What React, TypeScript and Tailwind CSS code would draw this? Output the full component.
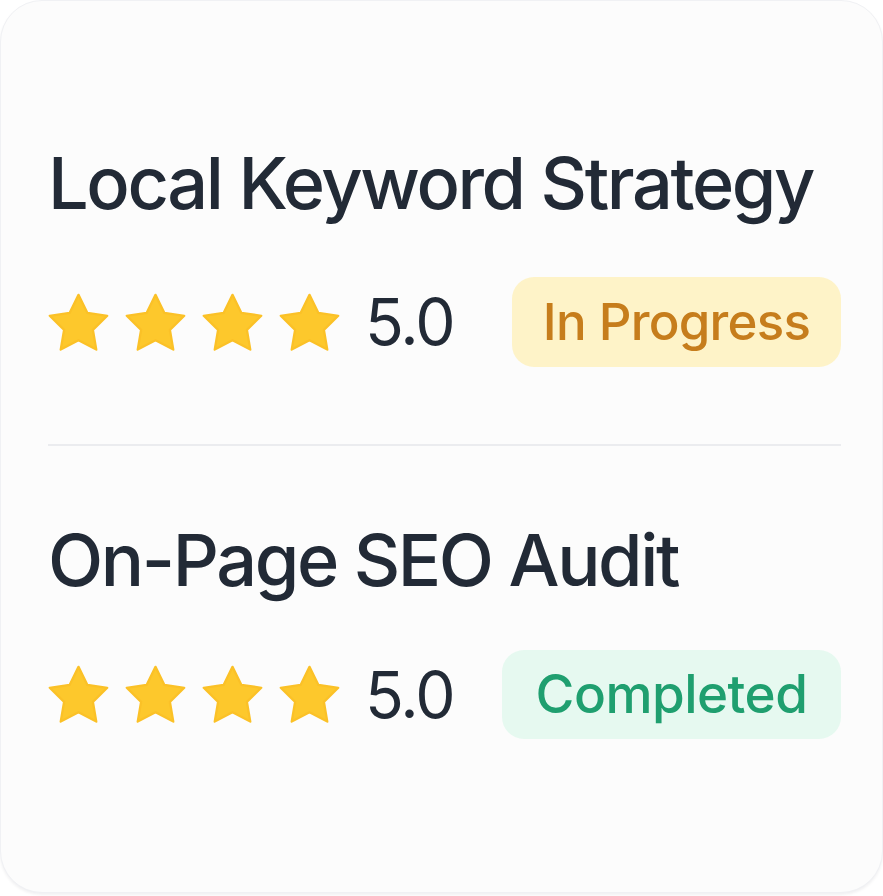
import type { ReactNode } from "react";

type Task = {
  title: string;
  rating: string;
  status: "progress" | "done";
};

const TASKS: Task[] = [
  { title: "Local Keyword Strategy", rating: "5.0", status: "progress" },
  { title: "On-Page SEO Audit", rating: "5.0", status: "done" },
];

function Star() {
  return (
    <svg viewBox="1.4 1.4 21.2 20.4" className="h-[61px] w-[61px] shrink-0">
      <path
        d="M12 2l3.09 6.26L22 9.27l-5 4.87 1.18 6.88L12 17.77l-6.18 3.25L7 14.14 2 9.27l6.91-1.01L12 2z"
        fill="#fdc82c"
        stroke="#fbc127"
        strokeWidth="0.8"
        strokeLinejoin="round"
      />
    </svg>
  );
}

function Badge({ status }: { status: Task["status"] }) {
  if (status === "progress") {
    return (
      <span className="flex h-[90px] w-[329px] items-center justify-center rounded-[22px] bg-[#fef3c8] text-[51px] font-medium tracking-[-0.015em] text-[#c67d1c]">
        In Progress
      </span>
    );
  }
  return (
    <span className="flex h-[89px] w-[339px] items-center justify-center rounded-[22px] bg-[#e6f9f0] text-[53px] font-medium tracking-[-0.01em] text-[#1f9f6f]">
      Completed
    </span>
  );
}

function Row({ children }: { children: ReactNode }) {
  return <div className="flex items-center justify-between">{children}</div>;
}

export default function App() {
  return (
    <div className="min-h-[896px] bg-white font-['Inter','Liberation_Sans',sans-serif]">
      <div className="flex h-[893px] flex-col rounded-[42px] border border-[#f0f1f4] bg-[#fcfcfc] pl-[47px] pr-[41px] pt-[146px] shadow-[0_2px_3px_rgba(15,23,42,0.06)]">
        {TASKS.map((task, i) => (
          <div key={task.title} className="flex flex-col">
            {i > 0 && <div className="mb-[78px] mt-[77px] h-[2px] bg-[#ebecef]" />}
            <h2 className="text-[72px] font-medium leading-none tracking-[-0.033em] text-[#222a36]">
              {task.title}
            </h2>
            <div className={i === 0 ? "mt-[58px]" : "mt-[54px]"}>
              <Row>
                <div className="flex items-center">
                  <div className="flex items-center gap-[16px]">
                    <Star />
                    <Star />
                    <Star />
                    <Star />
                  </div>
                  <span className="ml-[25px] text-[64px] leading-none tracking-[-0.03em] text-[#222a36]">
                    {task.rating}
                  </span>
                </div>
                <Badge status={task.status} />
              </Row>
            </div>
          </div>
        ))}
      </div>
    </div>
  );
}
